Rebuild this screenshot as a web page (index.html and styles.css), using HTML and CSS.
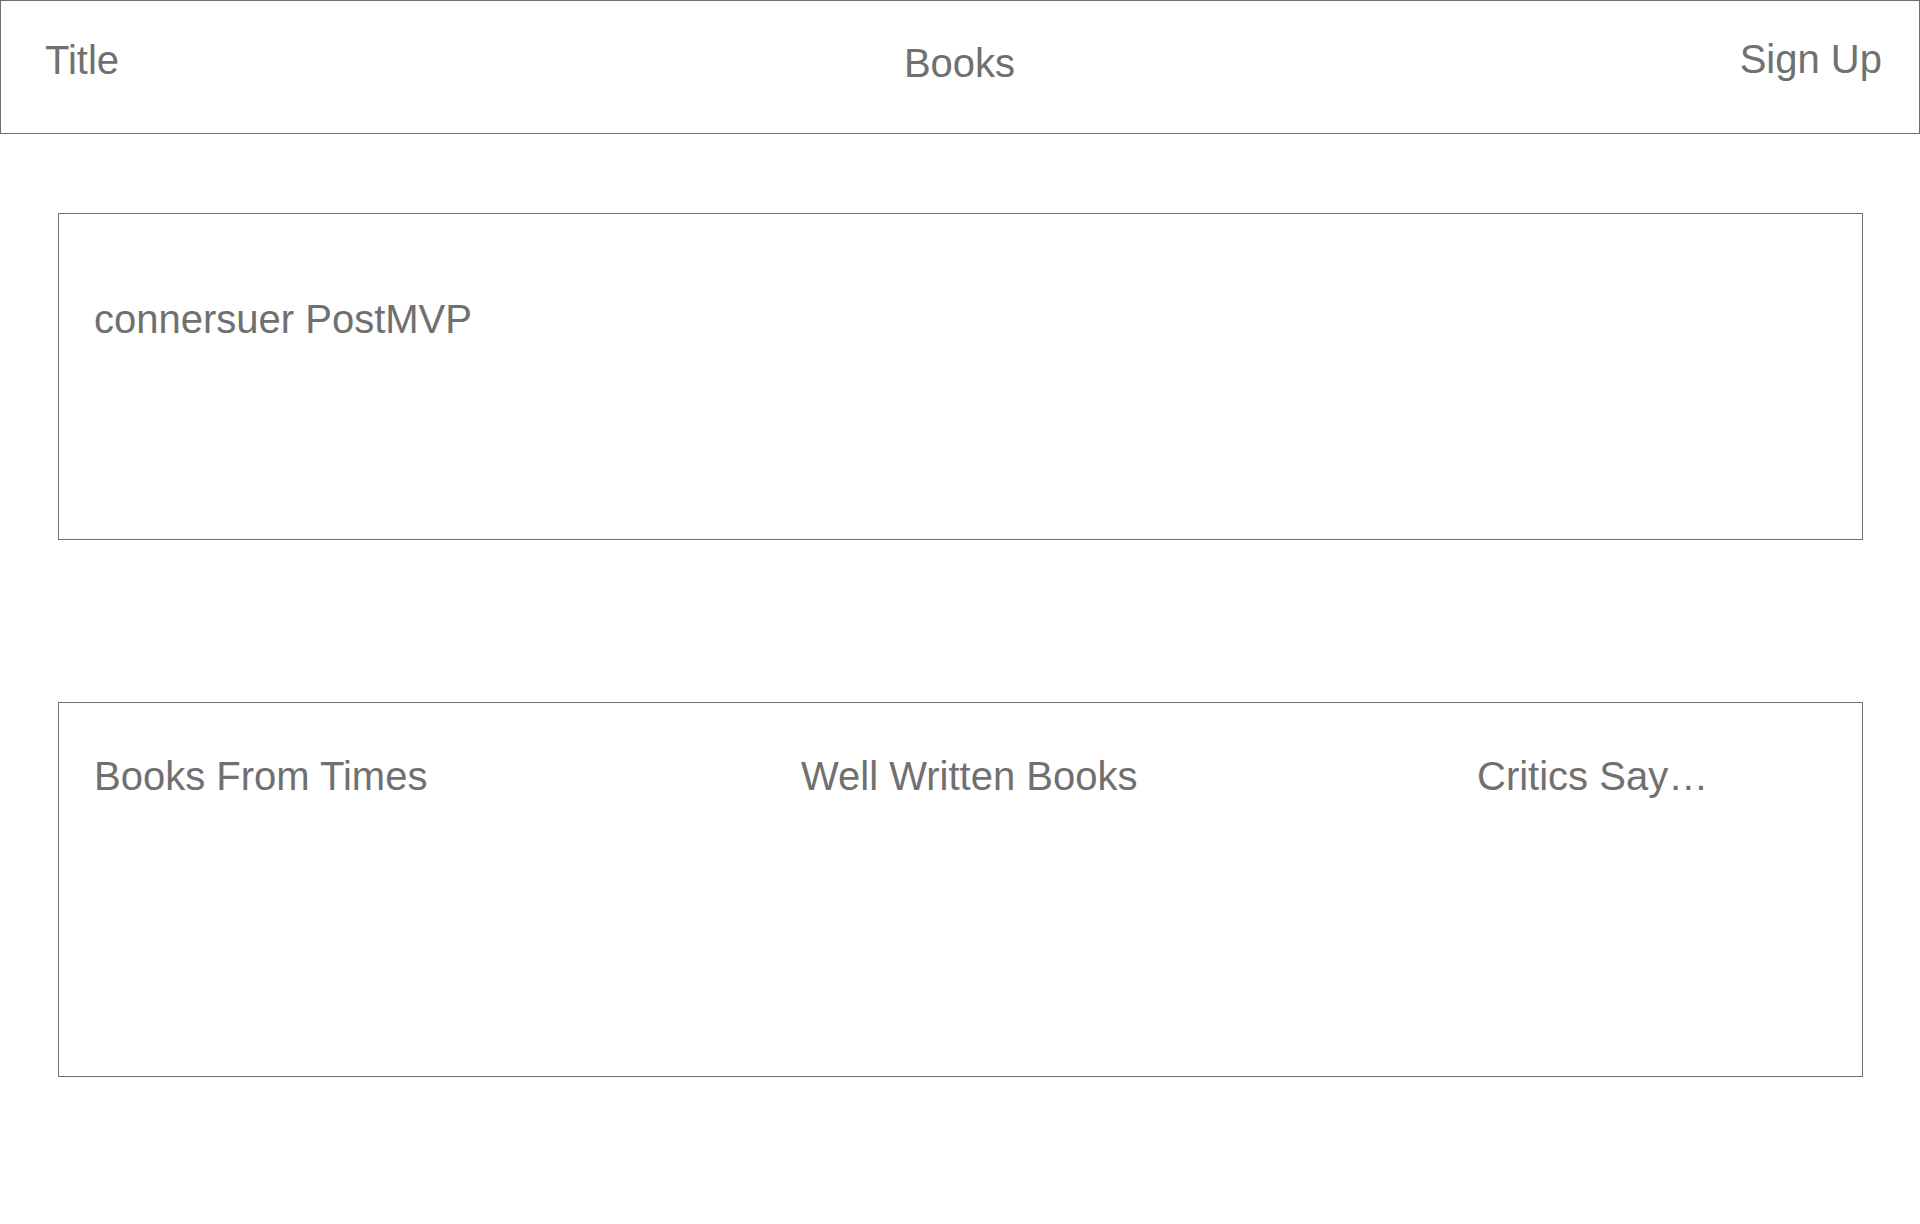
FILE: index.html
```html
<!DOCTYPE html>
<html lang="en">
<head>
<meta charset="utf-8">
<title>Books</title>
<link rel="stylesheet" href="styles.css">
</head>
<body>
<header class="topbar">
  <div class="brand">Title</div>
  <div class="nav-center">Books</div>
  <div class="signup">Sign Up</div>
</header>
<main class="content">
  <section class="panel panel-hero">
    <p class="panel-text">connersuer PostMVP</p>
  </section>
  <section class="panel panel-lists">
    <div class="col">Books From Times</div>
    <div class="col">Well Written Books</div>
    <div class="col">Critics Say…</div>
  </section>
</main>
</body>
</html>
```
FILE: styles.css
```css
html, body {
  margin: 0;
  padding: 0;
  background: #ffffff;
}
body {
  font-family: "Liberation Sans", Arial, Helvetica, sans-serif;
  font-size: 40px;
  line-height: 46px;
  color: #707070;
  width: 1920px;
  height: 1224px;
  overflow: hidden;
}
.topbar {
  box-sizing: border-box;
  height: 134px;
  border: 1px solid #707070;
  display: grid;
  grid-template-columns: 1fr auto 1fr;
  align-items: start;
  padding: 0 37px 0 44px;
}
.brand {
  margin-top: 36px;
  justify-self: start;
}
.nav-center {
  margin-top: 39px;
  margin-right: 8px;
  justify-self: center;
}
.signup {
  margin-top: 35px;
  justify-self: end;
}
.content {
  display: flex;
  flex-direction: column;
  padding: 79px 57px 0 58px;
  gap: 162px;
}
.panel {
  box-sizing: border-box;
  border: 1px solid #707070;
}
.panel-hero {
  height: 327px;
  padding: 82px 35px 0;
}
.panel-text {
  margin: 0;
}
.panel-lists {
  height: 375px;
  padding: 50px 35px 0;
  display: grid;
  grid-template-columns: 707px 676px auto;
  align-items: start;
}
```
